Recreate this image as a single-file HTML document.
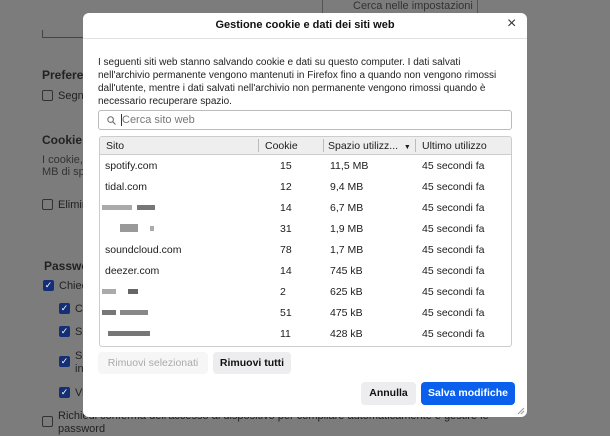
<!DOCTYPE html>
<html><head><meta charset="utf-8"><style>
*{box-sizing:border-box;margin:0;padding:0}
body{width:610px;height:433px;overflow:hidden;background:#7c7c7c;font-family:"Liberation Sans",sans-serif;color:#1c1c1c;position:relative;font-size:11px}
.a{position:absolute;white-space:nowrap}
.bg{color:#222}
.cb{position:absolute;width:11px;height:11px;border:1px solid #333;border-radius:2px}
.cbc{position:absolute;width:11px;height:11px;background:#142f75;border-radius:2px;color:#fff;font-size:9px;line-height:11px;text-align:center}
.dlg{position:absolute;left:83px;top:13px;width:444px;height:404px;background:#fff;border-radius:6px}
.row{position:absolute;left:0;width:412px;height:21px;font-size:10.5px}
.row span{position:absolute;top:5px}
.blur{position:absolute;height:5px;background:#888;top:8px}
</style></head><body>
<div class="a" style="left:322px;top:-1px;width:156px;height:17px;border:1px solid #555;border-top:none;color:#333;font-size:11px;padding:1px 0 0 30px">Cerca nelle impostazioni</div>
<div class="a" style="left:42px;top:30px;width:50px;height:8px;border-left:1px solid #444;border-bottom:1px solid #444"></div>
<div class="a bg" style="left:42px;top:68px;font-size:12px;font-weight:bold">Preferen</div>
<div class="cb" style="left:42px;top:90px"></div><div class="a bg" style="left:58px;top:90px">Segna</div>
<div class="a bg" style="left:42px;top:133px;font-size:12px;font-weight:bold">Cookie e</div>
<div class="a bg" style="left:42px;top:154px;color:#333">I cookie, I</div>
<div class="a bg" style="left:42px;top:166px;color:#333">MB di spa</div>
<div class="cb" style="left:42px;top:199px"></div><div class="a bg" style="left:58px;top:199px">Elimin</div>
<div class="a bg" style="left:44px;top:259px;font-size:12px;font-weight:bold">Passwo</div>
<div class="cbc" style="left:43px;top:280px">✓</div><div class="a bg" style="left:59px;top:280px">Chiec</div>
<div class="cbc" style="left:59px;top:303px">✓</div><div class="a bg" style="left:75px;top:303px">Co</div>
<div class="cbc" style="left:59px;top:326px">✓</div><div class="a bg" style="left:75px;top:326px">Su</div>
<div class="cbc" style="left:59px;top:356px">✓</div><div class="a bg" style="left:75px;top:350px;line-height:13px">Su<br>in</div>
<div class="cbc" style="left:59px;top:387px">✓</div><div class="a bg" style="left:75px;top:387px">Vi</div>
<div class="cb" style="left:42px;top:416px"></div>
<div class="a bg" style="left:58px;top:410px;line-height:13px">Richiedi conferma dell'accesso al dispositivo per compilare automaticamente e gestire le<br>password</div>

<div class="dlg">
<div class="a" style="left:0;width:444px;top:6px;text-align:center;font-weight:bold;font-size:11px;color:#111">Gestione cookie e dati dei siti web</div>
<div class="a" style="left:424px;top:2px;font-size:16px;color:#333">×</div>
<div class="a" style="left:0;top:25px;width:444px;height:1px;background:#e2e2e2"></div>
<div class="a" style="left:15px;top:43px;font-size:10px;line-height:13px;color:#222">I seguenti siti web stanno salvando cookie e dati su questo computer. I dati salvati<br>nell'archivio permanente vengono mantenuti in Firefox fino a quando non vengono rimossi<br>dall'utente, mentre i dati salvati nell'archivio non permanente vengono rimossi quando è<br>necessario recuperare spazio.</div>
<div class="a" style="left:15px;top:97px;width:414px;height:20px;border:1px solid #bbb;border-radius:3px">
<svg class="a" style="left:8px;top:5px" width="9" height="9" viewBox="0 0 9 9"><circle cx="3.6" cy="3.6" r="2.8" fill="none" stroke="#666" stroke-width="1"/><path d="M5.6 5.6L8.5 8.5" stroke="#666"/></svg>
<div class="a" style="left:22px;top:3px;width:1px;height:12px;background:#333"></div>
<div class="a" style="left:23px;top:3px;color:#777;font-size:11px">Cerca sito web</div>
</div>
<div class="a" style="left:16px;top:123px;width:413px;height:211px;border:1px solid #ccc;border-radius:3px;overflow:hidden">
<div class="a" style="left:0;top:0;width:413px;height:18px;background:#eeeeee;border-bottom:1px solid #ccc;font-size:10.5px">
<span class="a" style="left:6px;top:3px">Sito</span>
<div class="a" style="left:158px;top:2px;width:1px;height:13px;background:#bbb"></div>
<span class="a" style="left:165px;top:3px">Cookie</span>
<div class="a" style="left:223px;top:2px;width:1px;height:13px;background:#bbb"></div>
<span class="a" style="left:228px;top:3px">Spazio utilizz...&nbsp;&nbsp;<span style="font-size:7px">▼</span></span>
<div class="a" style="left:315px;top:2px;width:1px;height:13px;background:#bbb"></div>
<span class="a" style="left:322px;top:3px">Ultimo utilizzo</span>
</div>
<div class="row" style="top:18px"><span style="left:5px">spotify.com</span><span style="left:180px">15</span><span style="left:230px">11,5 MB</span><span style="left:322px">45 secondi fa</span></div>
<div class="row" style="top:39px"><span style="left:5px">tidal.com</span><span style="left:180px">12</span><span style="left:230px">9,4 MB</span><span style="left:322px">45 secondi fa</span></div>
<div class="row" style="top:60px"><div class="blur" style="left:2px;width:30px;background:#aaa"></div><div class="blur" style="left:37px;width:18px;background:#777"></div><span style="left:180px">14</span><span style="left:230px">6,7 MB</span><span style="left:322px">45 secondi fa</span></div>
<div class="row" style="top:81px"><div class="blur" style="left:20px;width:18px;background:#999;height:8px;top:6px"></div><div class="blur" style="left:50px;width:4px;background:#aaa"></div><span style="left:180px">31</span><span style="left:230px">1,9 MB</span><span style="left:322px">45 secondi fa</span></div>
<div class="row" style="top:102px"><span style="left:5px">soundcloud.com</span><span style="left:180px">78</span><span style="left:230px">1,7 MB</span><span style="left:322px">45 secondi fa</span></div>
<div class="row" style="top:123px"><span style="left:5px">deezer.com</span><span style="left:180px">14</span><span style="left:230px">745 kB</span><span style="left:322px">45 secondi fa</span></div>
<div class="row" style="top:144px"><div class="blur" style="left:2px;width:14px;background:#aaa"></div><div class="blur" style="left:28px;width:10px;background:#666"></div><span style="left:180px">2</span><span style="left:230px">625 kB</span><span style="left:322px">45 secondi fa</span></div>
<div class="row" style="top:165px"><div class="blur" style="left:2px;width:14px;background:#777"></div><div class="blur" style="left:20px;width:28px;background:#888"></div><span style="left:180px">51</span><span style="left:230px">475 kB</span><span style="left:322px">45 secondi fa</span></div>
<div class="row" style="top:186px"><div class="blur" style="left:8px;width:42px;background:#777"></div><span style="left:180px">11</span><span style="left:230px">428 kB</span><span style="left:322px">45 secondi fa</span></div>
</div>
<div class="a" style="left:15px;top:339px;width:110px;height:22px;background:#f6f6f7;border-radius:4px;color:#aaa;text-align:center;line-height:22px;font-size:10.5px">Rimuovi selezionati</div>
<div class="a" style="left:130px;top:339px;width:78px;height:22px;background:#ededf0;border-radius:4px;color:#111;text-align:center;line-height:22px;font-size:10.5px;font-weight:bold">Rimuovi tutti</div>
<div class="a" style="left:278px;top:369px;width:55px;height:23px;background:#ededf0;border-radius:4px;color:#111;text-align:center;line-height:23px;font-size:10.5px;font-weight:bold">Annulla</div>
<div class="a" style="left:338px;top:369px;width:94px;height:23px;background:#0a60ec;border-radius:4px;color:#fff;text-align:center;line-height:23px;font-size:10.5px;font-weight:bold">Salva modifiche</div>
<svg class="a" style="left:434px;top:394px" width="8" height="8"><path d="M7 1L1 7M7 4L4 7" stroke="#999"/></svg>
</div>
</body></html>
